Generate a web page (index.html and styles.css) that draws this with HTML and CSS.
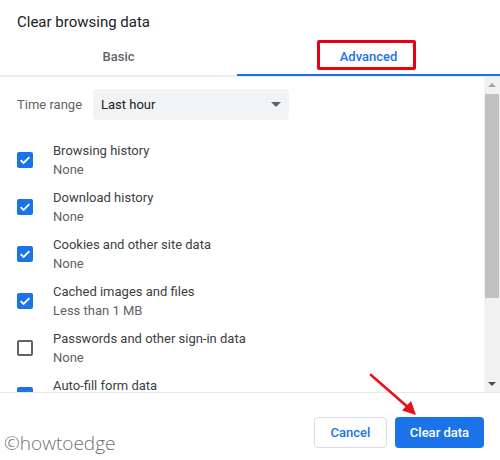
FILE: index.html
```html
<!DOCTYPE html>
<html>
<head>
<meta charset="utf-8">
<link rel="stylesheet" href="styles.css">
</head>
<body>
<div class="dialog">
  <div class="title">Clear browsing data</div>
  <div class="tabs">
    <div class="tab tab-basic">Basic</div>
    <div class="tab tab-adv active">Advanced</div>
  </div>
  <div class="body">
    <div class="content">
      <div class="range">
        <span class="range-label">Time range</span>
        <div class="select">
          <span>Last hour</span>
          <span class="caret"></span>
        </div>
      </div>
      <div class="item"><span class="cb checked"><svg viewBox="0 0 16 16"><path d="M3.6 8.2 L6.6 11 L12.4 5.2" fill="none" stroke="#fff" stroke-width="1.8"/></svg></span><div class="txt"><div class="it">Browsing history</div><div class="sub">None</div></div></div>
      <div class="item"><span class="cb checked"><svg viewBox="0 0 16 16"><path d="M3.6 8.2 L6.6 11 L12.4 5.2" fill="none" stroke="#fff" stroke-width="1.8"/></svg></span><div class="txt"><div class="it">Download history</div><div class="sub">None</div></div></div>
      <div class="item"><span class="cb checked"><svg viewBox="0 0 16 16"><path d="M3.6 8.2 L6.6 11 L12.4 5.2" fill="none" stroke="#fff" stroke-width="1.8"/></svg></span><div class="txt"><div class="it">Cookies and other site data</div><div class="sub">None</div></div></div>
      <div class="item"><span class="cb checked"><svg viewBox="0 0 16 16"><path d="M3.6 8.2 L6.6 11 L12.4 5.2" fill="none" stroke="#fff" stroke-width="1.8"/></svg></span><div class="txt"><div class="it">Cached images and files</div><div class="sub">Less than 1 MB</div></div></div>
      <div class="item"><span class="cb"></span><div class="txt"><div class="it">Passwords and other sign-in data</div><div class="sub">None</div></div></div>
      <div class="item"><span class="cb checked"><svg viewBox="0 0 16 16"><path d="M3.6 8.2 L6.6 11 L12.4 5.2" fill="none" stroke="#fff" stroke-width="1.8"/></svg></span><div class="txt"><div class="it">Auto-fill form data</div><div class="sub"></div></div></div>
    </div>
    <div class="scrollbar">
      <div class="sb-btn"><span class="up"></span></div>
      <div class="sb-track"><div class="sb-thumb"></div></div>
      <div class="sb-btn"><span class="down"></span></div>
    </div>
  </div>
  <div class="footer">
    <button class="btn cancel">Cancel</button>
    <button class="btn primary">Clear data</button>
  </div>
</div>
<div class="highlight"></div>
<svg class="arrow" width="60" height="50" viewBox="0 0 60 50">
  <line x1="4" y1="3" x2="43" y2="37" stroke="#e8111b" stroke-width="2.6" stroke-linecap="round"/>
  <polygon points="49,43 35,38.5 44,29" fill="#e8111b"/>
</svg>
<div class="watermark">©howtoedge</div>
</body>
</html>
```

FILE: styles.css
```css
* { box-sizing: border-box; }
html, body { margin: 0; padding: 0; }
body {
  width: 500px;
  height: 460px;
  overflow: hidden;
  background: #fff;
  font-family: Roboto, "Liberation Sans", sans-serif;
  position: relative;
}
.dialog {
  display: flex;
  flex-direction: column;
  height: 460px;
}
.title {
  font-size: 15px;
  color: #202124;
  padding: 13px 0 0 17px;
  height: 40px;
  line-height: 18px;
}
.tabs {
  display: flex;
  height: 37px;
  border-bottom: 2px solid #ececec;
}
.tab {
  font-size: 13px;
  font-weight: 500;
  color: #5f6368;
  text-align: center;
  line-height: 34px;
}
.tab-basic { width: 237px; }
.tab-adv { flex: 1; }
.tab.active {
  color: #1a73e8;
  border-bottom: 2px solid #1a73e8;
  height: 36px;
}
.body {
  display: flex;
  height: 316px;
  border-bottom: 1px solid #e8e8e8;
}
.content {
  flex: 1;
  padding-top: 12px;
  overflow: hidden;
}
.range {
  display: flex;
  align-items: center;
  height: 31px;
  margin-bottom: 16px;
}
.range-label {
  width: 93px;
  padding-left: 17px;
  font-size: 13px;
  color: #5f6368;
}
.select {
  width: 196px;
  height: 31px;
  background: #f1f3f4;
  border-radius: 4px;
  display: flex;
  align-items: center;
  justify-content: space-between;
  padding: 0 8px 0 8px;
  font-size: 13px;
  color: #202124;
}
.caret {
  width: 0;
  height: 0;
  border-left: 5px solid transparent;
  border-right: 5px solid transparent;
  border-top: 5px solid #5f6368;
}
.item {
  display: flex;
  align-items: center;
  height: 47px;
  flex-shrink: 0;
}
.cb {
  width: 16px;
  height: 16px;
  margin-left: 17px;
  margin-right: 20px;
  border: 2px solid #5f6368;
  border-radius: 2px;
  flex-shrink: 0;
  display: flex;
}
.cb.checked {
  background: #1a73e8;
  border: none;
}
.cb svg { width: 16px; height: 16px; }
.txt { line-height: 19px; }
.it { font-size: 13px; color: #3c4043; }
.sub { font-size: 13px; color: #5f6368; min-height: 19px; }
.scrollbar {
  width: 16px;
  background: #f1f1f1;
  display: flex;
  flex-direction: column;
}
.sb-btn {
  height: 16px;
  display: flex;
  align-items: center;
  justify-content: center;
}
.up {
  border-left: 4px solid transparent;
  border-right: 4px solid transparent;
  border-bottom: 4px solid #a3a3a3;
}
.down {
  border-left: 4px solid transparent;
  border-right: 4px solid transparent;
  border-top: 4px solid #505050;
}
.sb-track { flex: 1; padding: 1px 1px 0 1px; }
.sb-thumb {
  height: 204px;
  background: #c1c1c1;
}
.footer {
  flex: 1;
  display: flex;
  justify-content: flex-end;
  align-items: flex-start;
  gap: 8px;
  padding: 24px 16px 0 0;
}
.btn {
  font-family: Roboto, "Liberation Sans", sans-serif;
  font-size: 13px;
  font-weight: 500;
  height: 31px;
  border-radius: 4px;
  padding: 0;
  cursor: pointer;
}
.cancel {
  width: 73px;
  background: #fff;
  color: #1a73e8;
  border: 1px solid #dadce0;
}
.primary {
  width: 89px;
  background: #1a73e8;
  color: #fff;
  border: none;
}
.highlight {
  position: absolute;
  left: 317px;
  top: 40px;
  width: 99px;
  height: 30px;
  border: 3px solid #e60012;
  border-radius: 2px;
}
.arrow {
  position: absolute;
  left: 367px;
  top: 372px;
}
.watermark {
  position: absolute;
  left: 4px;
  top: 431px;
  font-family: "Open Sans", sans-serif;
  font-weight: 300;
  font-size: 19px;
  color: #6f6f6f;
  line-height: 24px;
}
```
